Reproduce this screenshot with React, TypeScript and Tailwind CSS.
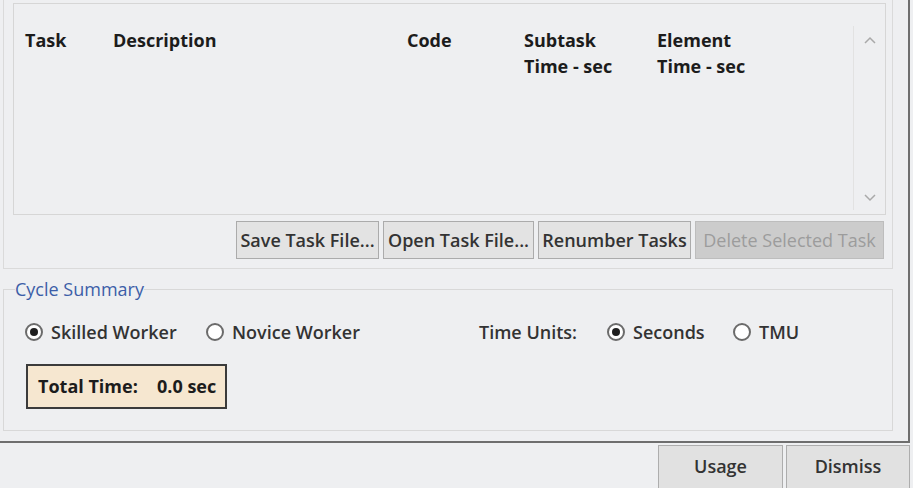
const Radio = ({ checked }: { checked?: boolean }) => (
    <span className="w-[18px] h-[18px] rounded-full border-2 border-[#6b6b6b] bg-white flex items-center justify-center shrink-0">
        {checked && <span className="w-[8px] h-[8px] rounded-full bg-[#1f1f1f]" />}
    </span>
);

const Option = ({ label, checked, width }: { label: string; checked?: boolean; width: string }) => (
    <label className={`flex items-center gap-[8px] ${width}`}>
        <Radio checked={checked} />
        <span>{label}</span>
    </label>
);

export default function App() {
    return (
        <div className="w-[913px] h-[488px] overflow-hidden bg-[#eeeff1] text-[#1c1c1c] font-['Open_Sans',sans-serif]">
            <div className="w-[910px] h-[443px] border-r-2 border-b-2 border-[#6e6e6e]">
                {/* task list group */}
                <div className="ml-[3px] w-[890px] h-[269px] border border-t-0 border-[#dadada] pt-[3px] pb-[9px]">
                    <div className="ml-[9px] w-[873px] h-[212px] border border-[#d6d6d6] flex">
                        <div className="flex-1 text-[18px] font-bold leading-[26px]">
                            <div className="flex pt-[23px]">
                                <span className="ml-[11px] w-[88px]">Task</span>
                                <span className="w-[294px]">Description</span>
                                <span className="w-[117px]">Code</span>
                                <span className="w-[133px]">Subtask<br />Time - sec</span>
                                <span>Element<br />Time - sec</span>
                            </div>
                        </div>
                        <div className="w-[32px] mt-[22px] mb-[4px] border-l border-[#e2e2e2] flex flex-col items-center justify-between text-[#a9a9a9] pb-[8px]">
                            <svg width="12" height="8" viewBox="0 0 12 8" className="mt-[10px]">
                                <path d="M1 7 L6 2 L11 7" fill="none" stroke="currentColor" strokeWidth="1.5" />
                            </svg>
                            <svg width="12" height="8" viewBox="0 0 12 8">
                                <path d="M1 1 L6 6 L11 1" fill="none" stroke="currentColor" strokeWidth="1.5" />
                            </svg>
                        </div>
                    </div>
                    <div className="flex justify-end gap-[4px] mt-[6px] mr-[8px] text-[18px] font-semibold text-[#333]">
                        <button className="w-[143px] h-[38px] bg-[#e3e3e3] border border-[#ababab] whitespace-nowrap">Save Task File...</button>
                        <button className="w-[151px] h-[38px] bg-[#e3e3e3] border border-[#ababab] whitespace-nowrap">Open Task File...</button>
                        <button className="w-[153px] h-[38px] bg-[#e3e3e3] border border-[#ababab] whitespace-nowrap">Renumber Tasks</button>
                        <button className="w-[189px] h-[38px] bg-[#cccccc] border border-[#bdbdbd] text-[#9c9c9c] font-medium whitespace-nowrap">Delete Selected Task</button>
                    </div>
                </div>
                {/* cycle summary group */}
                <fieldset className="ml-[3px] mt-[9px] w-[890px] h-[153px] border border-[#d8d8d8]">
                    <legend className="ml-[11px] text-[18px] leading-[22px] text-[#3c5ea8]">Cycle Summary</legend>
                    <div className="flex items-center mt-[20px] ml-[21px] h-[24px] text-[18px] font-semibold text-[#333] whitespace-nowrap">
                        <Option label="Skilled Worker" checked width="w-[181px]" />
                        <Option label="Novice Worker" width="w-[273px]" />
                        <span className="w-[128px]">Time Units:</span>
                        <Option label="Seconds" checked width="w-[126px]" />
                        <Option label="TMU" width="w-[100px]" />
                    </div>
                    <div className="ml-[22px] mt-[20px] w-[201px] h-[45px] border-2 border-[#3b3b3b] bg-[#f6e7d0] flex items-center pl-[10px] text-[18px] font-bold whitespace-nowrap">
                        <span className="w-[119px]">Total Time:</span>
                        <span>0.0 sec</span>
                    </div>
                </fieldset>
            </div>
            <div className="flex justify-end gap-[3px] mt-[2px] mr-[3px] text-[18px] font-semibold text-[#333]">
                <button className="w-[125px] h-[44px] bg-[#e1e1e1] border border-[#adadad] pb-[2px]">Usage</button>
                <button className="w-[124px] h-[44px] bg-[#e1e1e1] border border-[#adadad] pb-[2px]">Dismiss</button>
            </div>
        </div>
    );
}
